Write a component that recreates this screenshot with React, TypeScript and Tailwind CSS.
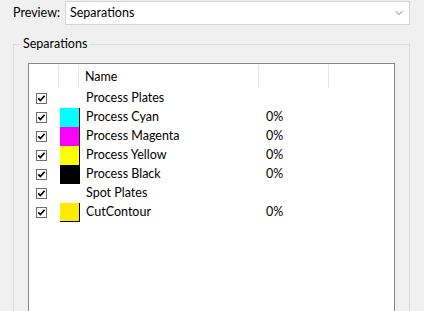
import { ChevronDown } from 'lucide-react';

interface Plate {
  name: string;
  swatch?: string;
  pct?: string;
  last?: boolean;
}

const plates: Plate[] = [
  { name: 'Process Plates' },
  { name: 'Process Cyan', swatch: 'bg-[#00ffff]', pct: '0%' },
  { name: 'Process Magenta', swatch: 'bg-[#ff00ff]', pct: '0%' },
  { name: 'Process Yellow', swatch: 'bg-[#ffff00]', pct: '0%' },
  { name: 'Process Black', swatch: 'bg-black', pct: '0%' },
  { name: 'Spot Plates' },
  { name: 'CutContour', swatch: 'bg-[#ffeb00]', pct: '0%', last: true },
];

function Check() {
  return (
    <div className="w-[11px] h-[11px] border border-[#6d6d6d] bg-white flex items-center justify-center">
      <svg width="9" height="9" viewBox="0 0 9 9">
        <path d="M1.3 4.3 L3.4 6.5 L7.6 1.8" fill="none" stroke="#000" strokeWidth="1.7" />
      </svg>
    </div>
  );
}

export default function App() {
  return (
    <div
      className="w-[424px] h-[311px] overflow-hidden bg-[#f0f0f0] text-[12.5px] text-black"
      style={{ fontFamily: '"Segoe UI", Lato, sans-serif' }}
    >
      {/* Preview row */}
      <div className="flex items-center pt-[1px] pl-[13px]">
        <span className="w-[52px]">Preview:</span>
        <div className="w-[345px] h-[24px] bg-white border border-[#d4d4d4] flex items-center justify-between pl-[4px] pr-[4px]">
          <span>Separations</span>
          <ChevronDown className="w-[12px] h-[12px] text-[#555]" strokeWidth={1.5} />
        </div>
      </div>

      {/* Group box */}
      <fieldset className="ml-[13px] mt-[11px] w-[397px] h-[300px] border border-[#dcdcdc] p-0">
        <legend className="ml-[7px] px-[2px] leading-[16px]">Separations</legend>

        <div className="mt-[11px] mx-[14px] h-[260px] bg-white border border-[#828790]">
          {/* Header */}
          <div className="flex h-[25px]">
            <div className="w-[30px] flex justify-end pt-[1px]"><div className="w-px h-[23px] bg-[#e5e5e5]" /></div>
            <div className="w-[20px] flex justify-end pt-[1px]"><div className="w-px h-[23px] bg-[#e5e5e5]" /></div>
            <div className="w-[180px] flex items-center justify-between pt-[1px]">
              <span className="pl-[6px]">Name</span>
              <div className="w-px h-[23px] bg-[#e5e5e5] self-start" />
            </div>
            <div className="w-[70px] flex justify-end pt-[1px]"><div className="w-px h-[23px] bg-[#e5e5e5]" /></div>
          </div>

          {/* Rows */}
          {plates.map((p) => (
            <div key={p.name} className="flex h-[19px] items-center">
              <div className="w-[31px] pl-[7px] flex items-center"><Check /></div>
              <div className="w-[20px] h-full">
                {p.swatch && (
                  <div className={`h-full w-full border-r border-black ${p.last ? 'border-b' : ''} ${p.swatch}`} />
                )}
              </div>
              <div className="w-[180px] pl-[6px] whitespace-nowrap">{p.name}</div>
              <div className="w-[70px] pl-[6px]">{p.pct}</div>
            </div>
          ))}
        </div>
      </fieldset>
    </div>
  );
}
